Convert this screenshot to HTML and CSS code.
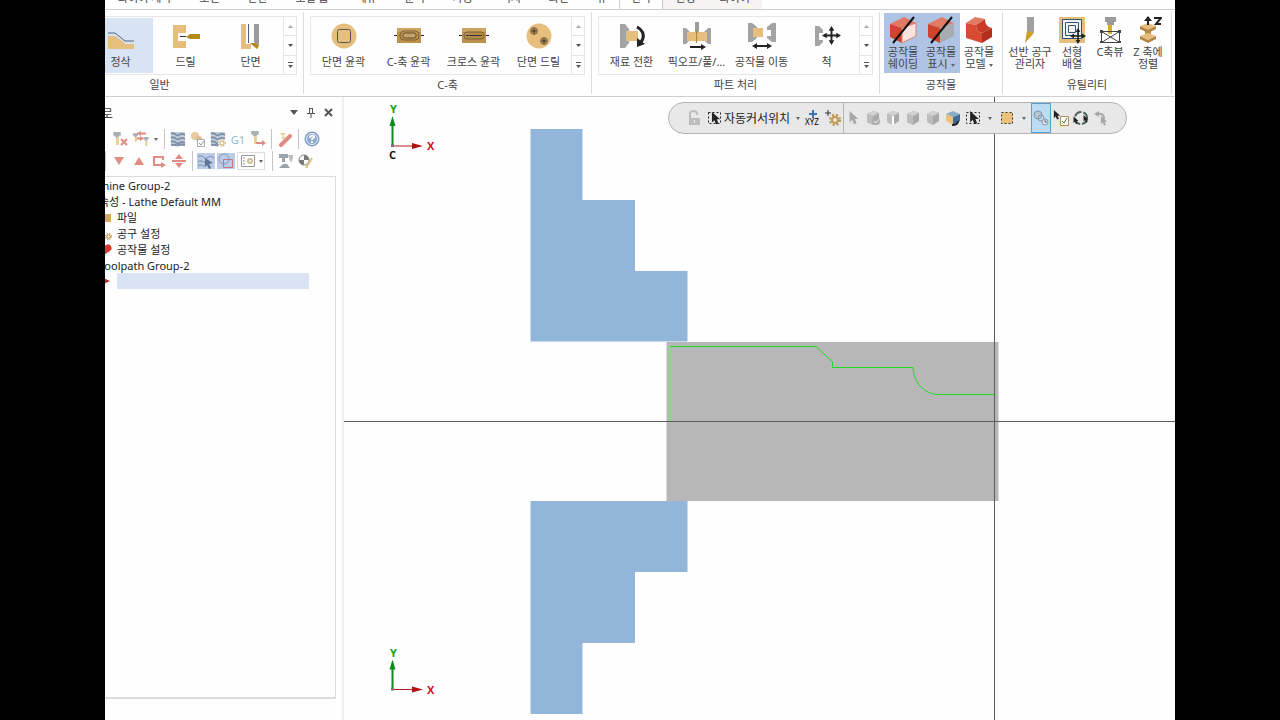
FILE: index.html
```
<!DOCTYPE html>
<html lang="ko">
<head>
  <meta charset="utf-8">
  <title>Lathe Default MM</title>
  <link rel="stylesheet" href="styles.css">
</head>
<body>
  <!-- shared icon shapes -->
  <svg class="defs" width="0" height="0" aria-hidden="true">
    <symbol id="pointer" viewBox="0 0 12 16"><path d="M1 0v13l3-3 2 5 3-1-2-5h4z" fill="currentColor"/></symbol>
    <symbol id="cube" viewBox="0 0 16 16">
      <path d="M2 4l6-3 6 2v8l-6 4-6-3z" fill="#a9a9a9"/>
      <path d="M2 4l6-3 6 2-6 3z" fill="#d2d2d2"/>
      <path d="M2 4l6 2v9l-6-3z" fill="#bdbdbd"/>
    </symbol>
    <symbol id="gear" viewBox="0 0 12 12">
      <circle cx="6" cy="6" r="5" fill="none" stroke="#b5914f" stroke-width="2" stroke-dasharray="2 2"/>
      <circle cx="6" cy="6" r="3" fill="none" stroke="#c39a4f" stroke-width="2"/>
    </symbol>
    <symbol id="tool" viewBox="0 0 8 14">
      <path d="M0 0h8v4H6v2H2V4H0z" fill="#6f7f86"/>
      <path d="M3 6h3v8H3z" fill="#d7b13a"/>
    </symbol>
    <symbol id="waves" viewBox="0 0 16 16">
      <path d="M1 1h14v14H1z" fill="#9fb0c6"/>
      <path d="M1 3c3-3 5 3 8 1s4-1 6 0M1 7c3-3 5 3 8 1s4-1 6 0M1 11c3-3 5 3 8 1s4-1 6 0M1 14c3-1 5 1 8 0s4 0 6 0" fill="none" stroke="#2d4b73" stroke-width="2"/>
    </symbol>
    <symbol id="moves" viewBox="0 0 20 20">
      <path d="M10 2v16M2 10h16" stroke="#222" stroke-width="2"/>
      <path d="M10 0l3 5H7zM10 20l3-5H7zM0 10l5-3v6zM20 10l-5-3v6z" fill="#222"/>
    </symbol>
  </svg>

  <div class="app">
    <nav class="tabs">
      <div class="tabs-main">
        <a href="#">와이어 제작</a>
        <a href="#">도면</a>
        <a href="#">변환</a>
        <a href="#">모델 홈</a>
        <a href="#">메뉴</a>
        <a href="#">준비</a>
        <a href="#">가공</a>
        <a href="#">머시</a>
        <a href="#">화면</a>
        <a href="#">뷰</a>
      </div>
      <a href="#" class="active">선삭</a>
      <div class="tabs-context">
        <a href="#">선행</a>
        <a href="#">와이어</a>
      </div>
    </nav>

    <div class="ribbon">
      <section class="group">
        <div class="gallery">
          <button class="item">
            <svg width="28" height="28" viewBox="0 0 28 28"><path d="M1 6h26v14H1z" fill="#e6bf7e"/></svg>
            황삭
          </button>
          <button class="item selected">
            <svg width="28" height="28" viewBox="0 0 28 28">
              <path d="M1 14h7l11 8h8v5H1z" fill="#e6bf7e"/>
              <path d="M1 11h7l10 8h9" fill="none" stroke="#4c6280"/>
            </svg>
            정삭
          </button>
          <button class="item">
            <svg width="28" height="28" viewBox="0 0 28 28">
              <path d="M1 3h13v8H6v8h8v7H1z" fill="#e6bf7e"/>
              <path d="M8 14.500h6" stroke="#333"/>
              <path d="M14 15l4-3h10v5H18z" fill="#b58a1c"/>
            </svg>
            드릴
          </button>
          <button class="item">
            <svg width="28" height="28" viewBox="0 0 28 28">
              <path d="M4 2h5v20h5v5H4z" fill="#e6bf7e"/>
              <path d="M11.500 2v19" stroke="#4c6280"/>
              <path d="M17 2h5v22l-5-4z" fill="#9b9b9b"/>
              <path d="M13 21h6l3 3-2 3z" fill="#b58a1c"/>
            </svg>
            단면
          </button>
          <div class="scroller">
            <button aria-label="위로" class="off"><svg width="5" height="3"><path d="M0 3h5L2.500 0z"/></svg></button>
            <button aria-label="아래로"><svg width="5" height="3"><path d="M0 0h5L2.500 3z"/></svg></button>
            <button aria-label="모두 보기"><svg width="5" height="6"><path d="M0 0h5v1H0zM0 3h5L2.500 6z"/></svg></button>
          </div>
        </div>
        <h2>일반</h2>
      </section>

      <section class="group">
        <div class="gallery">
          <button class="item">
            <svg width="28" height="28" viewBox="0 0 28 28">
              <circle cx="14" cy="14" r="12.500" fill="#e6bf7e"/>
              <rect x="7.500" y="7.500" width="13" height="13" rx="2" fill="none" stroke="#555"/>
            </svg>
            단면 윤곽
          </button>
          <button class="item">
            <svg width="30" height="28" viewBox="0 0 30 28">
              <path d="M0 13.500h30" stroke="#222"/>
              <path d="M3 6h24v15H3z" fill="#bd904c"/>
              <path d="M3 6h24v4H3z" fill="#cda360"/>
              <rect x="6" y="9" width="19" height="9" rx="4" fill="none" stroke="#7a6138"/>
              <rect x="9" y="11" width="13" height="5" rx="2" fill="#c7a36a" stroke="#5e5039"/>
            </svg>
            C-축 윤곽
          </button>
          <button class="item">
            <svg width="30" height="28" viewBox="0 0 30 28">
              <path d="M0 13.500h30" stroke="#222"/>
              <path d="M3 6h24v15H3z" fill="#bd904c"/>
              <path d="M3 6h24v4H3z" fill="#cda360"/>
              <rect x="5" y="10" width="20" height="7" rx="3" fill="#b18a4c" stroke="#7a6138"/>
              <path d="M7 13.500h16" stroke="#333"/>
            </svg>
            크로스 윤곽
          </button>
          <button class="item">
            <svg width="28" height="28" viewBox="0 0 28 28">
              <circle cx="14" cy="14" r="12.500" fill="#e6bf7e"/>
              <g fill="#b08b50" stroke="#8a7040"><circle cx="9" cy="9" r="3.500"/><circle cx="19" cy="19" r="3.500"/></g>
              <path d="M6.500 9h5M9 6.500v5M16.500 19h5M19 16.500v5" stroke="#333"/>
            </svg>
            단면 드릴
          </button>
          <div class="scroller">
            <button aria-label="위로" class="off"><svg width="5" height="3"><path d="M0 3h5L2.500 0z"/></svg></button>
            <button aria-label="아래로"><svg width="5" height="3"><path d="M0 0h5L2.500 3z"/></svg></button>
            <button aria-label="모두 보기"><svg width="5" height="6"><path d="M0 0h5v1H0zM0 3h5L2.500 6z"/></svg></button>
          </div>
        </div>
        <h2>C-축</h2>
      </section>

      <section class="group">
        <div class="gallery">
          <button class="item">
            <svg width="28" height="28" viewBox="0 0 28 28">
              <path d="M2 2h5l4 5v14l-4 5H2z" fill="#a3a3a3"/>
              <path d="M8 9h12v10H8z" fill="#e6bf7e"/>
              <path d="M19 5c7 4 8 10 4 15" fill="none" stroke="#222" stroke-width="3"/>
              <path d="M19 16v9l8-3z" fill="#222"/>
            </svg>
            재료 전환
          </button>
          <button class="item">
            <svg width="30" height="28" viewBox="0 0 30 28">
              <path d="M1 6h3l4 4v8l-4 4H1zM29 6h-3l-4 4v8l4 4h3z" fill="#a3a3a3"/>
              <path d="M5 10h20v9H5z" fill="#e6bf7e"/>
              <path d="M13 0h4v9l-2 3-2-2z" fill="#9b9b9b"/>
              <path d="M14.500 9v12" stroke="#b58a1c"/>
              <path d="M8 25h12" stroke="#222" stroke-width="2"/><path d="M19 22l5 3-5 3z" fill="#222"/>
            </svg>
            픽오프/풀/...
          </button>
          <button class="item">
            <svg width="30" height="28" viewBox="0 0 30 28">
              <path d="M1 1h4l5 4v11l-5 4H1zM29 1h-4l-5 4v3h4v6h-4v2l5 4h4z" fill="#a3a3a3"/>
              <path d="M6 6h10v9H6z" fill="#e6bf7e"/>
              <path d="M9 24h12" stroke="#222" stroke-width="2"/><path d="M10 21l-5 3 5 3zM20 21l5 3-5 3z" fill="#222"/>
            </svg>
            공작물 이동
          </button>
          <button class="item">
            <svg width="28" height="28" viewBox="0 0 28 28">
              <path d="M2 4h4l4 4v3H6v7h4v2l-4 4H2z" fill="#a3a3a3"/>
              <use href="#moves" x="9" y="4" width="19" height="19"/>
            </svg>
            척
          </button>
          <div class="scroller">
            <button aria-label="위로" class="off"><svg width="5" height="3"><path d="M0 3h5L2.500 0z"/></svg></button>
            <button aria-label="아래로"><svg width="5" height="3"><path d="M0 0h5L2.500 3z"/></svg></button>
            <button aria-label="모두 보기"><svg width="5" height="6"><path d="M0 0h5v1H0zM0 3h5L2.500 6z"/></svg></button>
          </div>
        </div>
        <h2>파트 처리</h2>
      </section>

      <section class="group compact">
        <div class="tools">
          <button class="tool pressed">
            <svg width="28" height="28" viewBox="0 0 28 28">
              <path d="M1 8l14-7 12 6-14 5z" fill="#e07a63"/><path d="M1 8l12 4v15L1 21z" fill="#d2422c"/>
              <path d="M13 12l14-5v13l-14 7z" fill="#fbe3e0" stroke="#d9826f"/>
              <path d="M4 27L25 1" stroke="#111" stroke-width="2"/>
            </svg>
            <span>공작물<br>쉐이딩</span>
          </button>
          <button class="tool pressed">
            <svg width="28" height="28" viewBox="0 0 28 28">
              <path d="M1 8l14-7 12 6-14 5z" fill="#e07a63"/><path d="M1 8l12 4v15L1 21z" fill="#d2422c"/>
              <path d="M13 12l14-5v13l-14 7z" fill="#a7adb0"/>
              <path d="M4 27L25 1" stroke="#111" stroke-width="2"/>
            </svg>
            <span>공작물<br>표시 <i class="caret"></i></span>
          </button>
          <button class="tool">
            <svg width="28" height="28" viewBox="0 0 28 28">
              <path d="M1 7l9-6 10 2-9 6z" fill="#e07a63"/>
              <path d="M11 9l9-6c0 5 2 8 7 9l-10 5c-4-1-6-4-6-8z" fill="#c93a26"/>
              <path d="M1 7l10 2c0 4 2 7 6 8v10L1 22z" fill="#d94a33"/>
              <path d="M17 17l10-5v9l-10 6z" fill="#b02f1d"/>
            </svg>
            <span>공작물<br>모델 <i class="caret"></i></span>
          </button>
        </div>
        <h2>공작물</h2>
      </section>

      <section class="group compact">
        <div class="tools">
          <button class="tool wide">
            <svg width="28" height="28" viewBox="0 0 28 28">
              <path d="M11 1h7v16l-7-1z" fill="#a0a0a3"/><path d="M11 15l7 2-9 10z" fill="#cf9f1f"/>
            </svg>
            <span>선반 공구<br>관리자</span>
          </button>
          <button class="tool">
            <svg width="28" height="28" viewBox="0 0 28 28">
              <path d="M1 1h26v26H1z" fill="#e6bf7e"/>
              <path d="M4.500 3.500h19v19h-19z" fill="#eef2f5" stroke="#34506b"/>
              <path d="M7.500 6.500h13v13h-13zM10.500 9.500h7v7h-7z" fill="none" stroke="#34506b"/>
              <use href="#moves" x="12" y="12" width="16" height="16"/>
            </svg>
            <span>선형<br>배열</span>
          </button>
          <button class="tool">
            <svg width="28" height="28" viewBox="0 0 28 28">
              <path d="M9 1h11v5h-2v3h-7V6H9z" fill="#9a9a9c"/><path d="M12 9h4v9h-4z" fill="#d9ad2d"/>
              <path d="M5.500 15.500h18v11h-18zM5.500 15.500l18 11M5.500 26.500l18-11" fill="none" stroke="#444"/>
              <path d="M4 14h3v3H4zM22 14h3v3h-3zM4 25h3v2H4zM22 25h3v2h-3z" fill="#444"/>
            </svg>
            <span>C축뷰</span>
          </button>
          <button class="tool">
            <svg width="28" height="28" viewBox="0 0 28 28">
              <path d="M11 12h6v9h-6z" fill="#c4924c"/>
              <path d="M6 10l8-3 8 3-8 4zM6 20l8-3 8 3-8 4z" fill="#e6bf7e"/>
              <path d="M6 10l8 4 8-4v3l-8 4-8-4zM6 20l8 4 8-4v3l-8 4-8-4z" fill="#b48444"/>
              <path d="M14 3v6" stroke="#222" stroke-width="2"/><path d="M14 0l4 5h-8z" fill="#222"/>
              <path d="M20 2h7l-5 6h5" fill="none" stroke="#222" stroke-width="2"/>
            </svg>
            <span>Z 축에<br>정렬</span>
          </button>
        </div>
        <h2>유틸리티</h2>
      </section>
    </div>

    <main>
      <aside>
        <header>
          <h1>가공경로</h1>
          <button aria-label="메뉴"><svg width="8" height="5"><path d="M0 0h8L4 5z" fill="#555"/></svg></button>
          <button aria-label="고정"><svg width="8" height="10"><path d="M2 .5h4M2.500 0v5M5.500 0v5M0 5.500h8M4 6v4" fill="none" stroke="#555"/></svg></button>
          <button aria-label="닫기"><svg width="9" height="9"><path d="M1 1l7 7M8 1L1 8" stroke="#555" stroke-width="2"/></svg></button>
        </header>

        <div class="toolbar">
          <button aria-label="모두 선택"><svg viewBox="0 0 16 16"><use href="#tool" x="2" y="1" width="8" height="14"/></svg></button>
          <button aria-label="선택 해제"><svg viewBox="0 0 16 16"><use href="#tool" x="0" y="1" width="8" height="13"/><path d="M8 8l6 6M14 8l-6 6" stroke="#cf4035" stroke-width="2"/></svg></button>
          <button aria-label="가공 교체"><svg viewBox="0 0 16 16"><path d="M4 2.500h9M3 7.500h6" stroke="#cf4035" stroke-width="2"/><path d="M8 0v5L4 2.500zM7 5v5l4-2.500z" fill="#cf4035"/><use href="#tool" x="0" y="2" width="5" height="9"/><use href="#tool" x="10" y="6" width="6" height="9"/></svg></button>
          <button class="drop" aria-label="더보기"><i class="caret"></i></button>
          <hr>
          <button aria-label="경로 재생성"><svg viewBox="0 0 16 16"><use href="#waves"/></svg></button>
          <button aria-label="선택 재생성"><svg viewBox="0 0 16 16"><circle cx="5" cy="5" r="4" fill="#d8a95c"/><circle cx="9" cy="8" r="3" fill="#c99a4c"/><path d="M7.500 8.500h7v7h-7z" fill="#fff" stroke="#777"/><path d="M9 12l2 2 3-4" fill="none" stroke="#555"/></svg></button>
          <button aria-label="경로 설정"><svg viewBox="0 0 16 16"><use href="#waves"/><circle cx="12" cy="12" r="4" fill="#fff"/><use href="#gear" x="8" y="8" width="8" height="8"/></svg></button>
          <button class="g1" aria-label="포스트">G1</button>
          <button aria-label="이송"><svg viewBox="0 0 16 16"><use href="#tool" x="1" y="0" width="8" height="13"/><path d="M6 12h7" stroke="#cf4035" stroke-width="2"/><path d="M12 9l4 3-4 3z" fill="#cf4035"/></svg></button>
          <hr>
          <button aria-label="고속 가공"><svg viewBox="0 0 16 16"><path d="M4 14l9-9" stroke="#cf4035" stroke-width="4" stroke-linecap="round"/><path d="M3 2h6l-3 3 4 2-6 1 2-3z" fill="#d7b13a"/></svg></button>
          <hr>
          <button aria-label="도움말"><svg viewBox="0 0 16 16"><circle cx="8" cy="8" r="7" fill="#3f71b2" stroke="#174f96"/><circle cx="8" cy="8" r="5.500" fill="none" stroke="#dbe7f5"/><path d="M6 7c0-3 4-3 4-1 0 1-2 1-2 3M8 10v2" fill="none" stroke="#fff" stroke-width="2"/></svg></button>
        </div>

        <div class="toolbar">
          <button aria-label="잠금"></button>
          <hr class="first">
          <button aria-label="아래로 이동"><svg viewBox="0 0 16 16"><path d="M3 4h10l-5 8z" fill="#cf4035"/></svg></button>
          <button aria-label="위로 이동"><svg viewBox="0 0 16 16"><path d="M3 12h10L8 4z" fill="#cf4035"/></svg></button>
          <button aria-label="삽입 위치"><svg viewBox="0 0 16 16"><path d="M12 4H3v8h8M12 3v4" fill="none" stroke="#cf4035" stroke-width="2"/><path d="M10 9l5 3-5 3z" fill="#cf4035"/></svg></button>
          <button aria-label="스크롤"><svg viewBox="0 0 16 16"><path d="M4 6h8L8 1zM4 10h8l-4 5z" fill="#cf4035"/><path d="M1 8h14" stroke="#cf4035" stroke-width="2"/></svg></button>
          <hr>
          <button class="on" aria-label="경로 표시"><svg viewBox="0 0 16 16"><path d="M0 4c4-4 6 3 9 1s4-2 7 0M0 9c3-3 5 1 7 0M0 13c3-3 5 1 7 0" fill="none" stroke="#3d5f8a"/><path d="M7 5l8 5-4 1 2 4-2 1-2-4-2 2z" fill="#223b5e"/></svg></button>
          <button class="on" aria-label="형상 표시"><svg viewBox="0 0 16 16"><circle cx="6" cy="6" r="5" fill="none" stroke="#5979a8"/><path d="M5.500 6.500h9v8h-9z" fill="none" stroke="#c4413c"/></svg></button>
          <button class="menu" aria-label="표시 옵션"><svg viewBox="0 0 16 16"><path d="M1.500 2.500h13v11h-13zM3 5h2M3 8h2M3 11h2" fill="none" stroke="#555"/><circle cx="10" cy="8" r="2" fill="none" stroke="#b5914f" stroke-width="2"/></svg><i class="caret"></i></button>
          <hr>
          <button aria-label="머신"><svg viewBox="0 0 16 16"><path d="M1 1h9v4H7v4H4V5H1zM1 15l4-4h4l3 4z" fill="#5b6a73"/><path d="M10 2h5v3l-2 5-2-5z" fill="#8a969c"/></svg></button>
          <button aria-label="편집"><svg viewBox="0 0 16 16"><circle cx="6" cy="7" r="5" fill="#fff" stroke="#333"/><path d="M6 7V2a5 5 0 0 1 5 5zM6 7v5a5 5 0 0 1-5-5z" fill="#222"/><path d="M8 15l6-10" stroke="#c79c22" stroke-width="2"/></svg></button>
        </div>

        <ul class="tree">
          <li class="group-name">Machine Group-2</li>
          <li class="props">속성 - Lathe Default MM</li>
          <li class="leaf"><svg width="14" height="14" viewBox="0 0 14 14"><path d="M0 3h5l1 1h6v8H0z" fill="#d8a95c"/></svg>파일</li>
          <li class="leaf"><svg width="14" height="14" viewBox="0 0 14 14"><use href="#gear" x="6" y="7" width="7" height="7"/></svg>공구 설정</li>
          <li class="leaf"><svg width="14" height="14" viewBox="0 0 14 14"><path d="M3 10l6-4" stroke="#cf3c2c" stroke-width="7" stroke-linecap="round"/></svg>공작물 설정</li>
          <li class="props">Toolpath Group-2</li>
          <li class="leaf"><svg width="14" height="14" viewBox="0 0 14 14"><path d="M2 3l9 4-9 4z" fill="#c0281c"/></svg><span class="insert"></span></li>
        </ul>
      </aside>

      <div class="view">
        <svg class="drawing" viewBox="344 97 831 623">
          <!-- chuck jaws -->
          <path class="jaw" d="M530.500 129H582.500V200H635V271H687.500V341.500H530.500z"/>
          <path class="jaw" d="M530.500 501H687.500V572H635V643H582.500V714H530.500z"/>
          <!-- stock and part profile -->
          <path d="M666.500 342H998.500V501H666.500z" fill="#b7b7b7"/>
          <path d="M670.500 421V346" stroke="#8fd58c" stroke-width="3"/>
          <path d="M670 346.500H816L832.500 362V367.500H913C914 383 924 394.500 939 394.500H994" fill="none" stroke="#1fdc1f"/>
          <path d="M344 421.500H1175M994.500 97V720" stroke="#5c5c5c"/>
          <!-- axis gnomons -->
          <g id="axes">
            <path d="M392.500 146V122" stroke="#0f8a1f" stroke-width="2"/><path d="M392.500 116l3 10h-6z" fill="#0f8a1f"/>
            <path d="M393 146H414" stroke="#b02020"/><path d="M423 146l-11-3v6z" fill="#b01212"/>
            <path d="M391 144h3v3h-3z" fill="#777"/>
            <text x="390" y="113" fill="#16a016">Y</text>
            <text x="427" y="150" fill="#d01020">X</text>
          </g>
          <text x="389" y="159" fill="#111">C</text>
          <use href="#axes" y="543.500"/>
        </svg>

        <div class="cursorbar">
          <button aria-label="잠금"><svg viewBox="0 0 16 16"><path d="M3 8h11v7H3z" fill="#bdbdbd"/><path d="M4 8V4c0-4 7-4 7 0v1" fill="none" stroke="#bdbdbd" stroke-width="2"/><path d="M8 10h1v3H8z" fill="#eee"/></svg></button>
          <button class="snap"><svg viewBox="0 0 16 16"><path d="M1.500 2.500h12v11h-12z" fill="none" stroke="#222" stroke-dasharray="2 2"/><use href="#pointer" x="4" y="2" width="10" height="13"/></svg>자동커서위치<i class="caret"></i></button>
          <button class="xyz" aria-label="좌표 입력"><svg viewBox="0 0 18 18"><path d="M9 1v8M5 5h8" stroke="#3f73b5" stroke-width="2"/><text x="1" y="16">XYZ</text></svg></button>
          <button aria-label="커서 설정"><svg viewBox="0 0 16 16"><path d="M3 0v6M0 3h6" stroke="#333"/><use href="#gear" x="4" y="4" width="12" height="12"/></svg></button>
          <button class="faded split" aria-label="선택"><svg viewBox="0 0 16 16"><use href="#pointer" x="2" y="1" width="12" height="14"/></svg></button>
          <button class="faded" aria-label="솔리드 선택"><svg viewBox="0 0 16 16"><use href="#cube"/><circle cx="11" cy="11" r="4" fill="#aaa"/><path d="M9 11l2 2 3-4" fill="none" stroke="#eee"/></svg></button>
          <button class="faded" aria-label="모서리 선택"><svg viewBox="0 0 16 16"><use href="#cube"/><path d="M8 6v9" stroke="#fff" stroke-width="2"/></svg></button>
          <button class="faded" aria-label="면 선택"><svg viewBox="0 0 16 16"><use href="#cube"/></svg></button>
          <button class="faded" aria-label="바디 선택"><svg viewBox="0 0 16 16"><use href="#cube"/></svg></button>
          <button aria-label="뒷면 선택"><svg viewBox="0 0 16 16"><path d="M1 4l7 3v8l-7-4z" fill="#edc078"/><path d="M8 7l7-3v7l-7 4z" fill="#3f6c98"/><path d="M1 4l7-3 7 3-7 3z" fill="#8dabc6"/><path d="M7 15c4 0 6-1 6-4" fill="none" stroke="#222" stroke-width="2"/></svg></button>
          <button aria-label="창 선택"><svg viewBox="0 0 16 16"><path d="M1.500 2.500h13v11h-13z" fill="none" stroke="#222" stroke-dasharray="2 2"/><use href="#pointer" x="4" y="1" width="11" height="14"/></svg></button>
          <button class="drop" aria-label="창 옵션"><i class="caret"></i></button>
          <button aria-label="영역"><svg viewBox="0 0 16 16"><path d="M2.500 2.500h11v11h-11z" fill="#edc078" stroke="#333" stroke-dasharray="2 2"/></svg></button>
          <button class="drop" aria-label="영역 옵션"><i class="caret"></i></button>
          <button class="active" aria-label="검증"><svg viewBox="0 0 16 16"><circle cx="5" cy="5" r="4" fill="#b9c6d3" stroke="#8798a9"/><circle cx="8" cy="8" r="3" fill="none" stroke="#8798a9"/><circle cx="12" cy="12" r="3" fill="#dbe6f0" stroke="#8798a9"/><path d="M12 10v2h2" fill="none" stroke="#667"/></svg></button>
          <button aria-label="선택 확인"><svg viewBox="0 0 16 16"><use href="#pointer" x="0" y="0" width="8" height="10"/><path d="M7.500 6.500h8v9h-8z" fill="#fff" stroke="#b5914f"/><path d="M9 11l2 2 3-5" fill="none" stroke="#4b7a4b"/></svg></button>
          <button aria-label="선택 반전"><svg viewBox="0 0 16 16"><circle cx="8" cy="8" r="6" fill="none" stroke="#4d6659" stroke-width="2" stroke-dasharray="8 2"/><use href="#pointer" x="0" y="6" width="6" height="9"/><use href="#pointer" x="10" y="5" width="6" height="8"/></svg></button>
          <button class="faded" aria-label="마지막 선택"><svg viewBox="0 0 16 16"><path d="M4 4c5-1 7 1 7 5" fill="none" stroke="currentColor" stroke-width="2"/><path d="M1 4l5-3v6z" fill="currentColor"/><use href="#pointer" x="7" y="6" width="8" height="10"/></svg></button>
        </div>
      </div>
    </main>
  </div>
</body>
</html>
```
FILE: styles.css
```
* {
  box-sizing: border-box;
}

body {
  margin: 0;
  background-color: #000;
  color: #444;
  font-family: "Noto Sans", "Noto Sans CJK KR", sans-serif;
  font-size: 11px;
}

button {
  margin: 0;
  padding: 0;
  border: none;
  background: none;
  color: inherit;
  font: inherit;
  white-space: nowrap;
}

h1, h2 {
  margin: 0;
  font-size: 11px;
  font-weight: normal;
}

a {
  color: inherit;
  text-decoration: none;
}

.defs {
  position: absolute;
}

.app {
  display: flex;
  flex-direction: column;
  height: 100vh;
  margin: 0 105px;
  background-color: #fefefe;
  overflow: hidden;
}

.caret {
  display: inline-block;
  border: 2px solid transparent;
  border-top: 3px solid #666;
  border-bottom: none;
  vertical-align: middle;
}

/* tab strip */
.tabs {
  display: flex;
  align-items: flex-end;
  flex: none;
  height: 10px;
  overflow: hidden;
  border-bottom: 1px solid #cfcfcf;
}

.tabs a {
  line-height: 16px;
  padding-bottom: 3px;
  white-space: nowrap;
}

.tabs-main {
  display: flex;
  justify-content: space-between;
  width: 514px;
  padding: 0 12px 0 13px;
}

.tabs .active {
  padding: 0 11px 3px;
  border-left: 1px solid #cfcfcf;
  border-right: 1px solid #cfcfcf;
}

.tabs-context {
  display: flex;
  gap: 24px;
  padding: 0 12px;
  background-color: #f6f4f2;
}

/* ribbon */
.ribbon {
  display: flex;
  flex: none;
  margin-left: -89px;
  padding: 2px 0;
  border-bottom: 1px solid #cfcfcf;
}

.group {
  flex: none;
  padding: 1px 6px 0;
  border-right: 1px solid #dcdcdc;
}

.compact {
  padding: 1px 4px 0;
}

.group h2 {
  height: 19px;
  padding-top: 3px;
  line-height: 14px;
  text-align: center;
}

.gallery {
  display: flex;
  height: 59px;
  margin-top: 3px;
  border: 1px solid #e6e6e6;
}

.item {
  display: flex;
  flex-direction: column;
  align-items: center;
  width: 65px;
  margin: 1px 0;
  padding-top: 4px;
  line-height: 16px;
}

.item svg {
  flex: none;
  margin-bottom: 4px;
}

.selected {
  background-color: #d8e3f3;
}

.scroller {
  display: flex;
  flex-direction: column;
  width: 13px;
  border-left: 1px solid #e6e6e6;
}

.scroller button {
  display: flex;
  flex: 1;
  justify-content: center;
  align-items: center;
  fill: #555;
}

.scroller button + button {
  border-top: 1px solid #e6e6e6;
}

.scroller .off {
  fill: #aaa;
}

.tools {
  display: flex;
  height: 62px;
  padding-bottom: 2px;
}

.tool {
  display: flex;
  flex-direction: column;
  align-items: center;
  width: 38px;
  padding-top: 3px;
  line-height: 12px;
}

.tool svg {
  flex: none;
  margin-bottom: 2px;
}

.wide {
  width: 46px;
}

.pressed {
  background-color: #afc4e5;
}

main {
  display: flex;
  flex: 1;
  min-height: 0;
}

/* toolpath manager */
aside {
  display: flex;
  flex-direction: column;
  flex: none;
  width: 279px;
  margin-left: -40px;
  padding: 0 6px 0 0;
  border-right: 2px solid #f0f0f0;
}

aside header {
  display: flex;
  align-items: center;
  gap: 9px;
  height: 31px;
}

aside h1 {
  flex: 1;
  font-size: 13px;
}

aside header button {
  display: flex;
}

aside header button:last-child {
  margin-right: 3px;
}

.toolbar {
  display: flex;
  align-items: center;
  height: 22px;
  padding-left: 26px;
}

.toolbar button {
  display: flex;
  flex: none;
  justify-content: center;
  align-items: center;
  width: 20px;
  height: 18px;
}

.toolbar svg {
  width: 16px;
  height: 16px;
  opacity: 0.6;
}

.toolbar hr {
  flex: none;
  width: 1px;
  height: 20px;
  margin: 0 3px;
  border: none;
  background-color: #c4c4c4;
}

.toolbar .first {
  margin-left: -6px;
}

.toolbar .drop {
  width: 10px;
}

.toolbar .g1 {
  color: #92b9cf;
}

.toolbar .on {
  border: 1px solid #fff;
  background-color: #bccce6;
}

.toolbar .menu {
  gap: 3px;
  width: 28px;
  margin: 0 4px 0 1px;
  border: 1px solid #dedede;
}

.tree {
  flex: 1;
  margin: 4px 0 21px;
  padding: 0 0 0 12px;
  border: 1px solid #dcdcdc;
  border-width: 1px 1px 2px 0;
  color: #222;
  list-style: none;
}

.tree li {
  display: flex;
  align-items: center;
  height: 16px;
  white-space: nowrap;
}

.tree .group-name {
  padding-left: 4px;
}

.tree .props {
  padding-left: 22px;
}

.tree .leaf {
  gap: 4px;
  padding-left: 22px;
}

.insert {
  flex: 1;
  height: 16px;
  margin-right: 26px;
  background-color: #d9e3f3;
}

/* graphics view */
.view {
  position: relative;
  flex: 1;
  min-width: 0;
}

.drawing {
  display: block;
  width: 100%;
  height: 100%;
  font-family: "Open Sans", sans-serif;
  font-size: 11px;
  font-weight: bold;
}

.jaw {
  fill: #92b5da;
}

.cursorbar {
  position: absolute;
  top: 5px;
  right: 48px;
  display: flex;
  align-items: center;
  height: 32px;
  padding: 0 15px;
  border: 1px solid #b3b3b3;
  border-radius: 16px;
  background-color: #e8e8e8;
  color: #222;
}

.cursorbar button {
  display: flex;
  flex: none;
  justify-content: center;
  align-items: center;
  width: 20px;
  height: 30px;
}

.cursorbar svg {
  width: 16px;
  height: 16px;
}

.cursorbar .snap {
  gap: 1px;
  width: 99px;
  font-size: 12px;
}

.snap .caret {
  margin-left: 5px;
}

.cursorbar .xyz svg {
  width: 18px;
  height: 18px;
  font-size: 8px;
}

.cursorbar .faded {
  color: #a8a8a8;
}

.cursorbar .split {
  border-left: 1px solid #b3b3b3;
}

.cursorbar .drop {
  width: 14px;
}

.cursorbar .active {
  border: 1px solid #5a9fd0;
  background-color: #bcdcf4;
}
```
